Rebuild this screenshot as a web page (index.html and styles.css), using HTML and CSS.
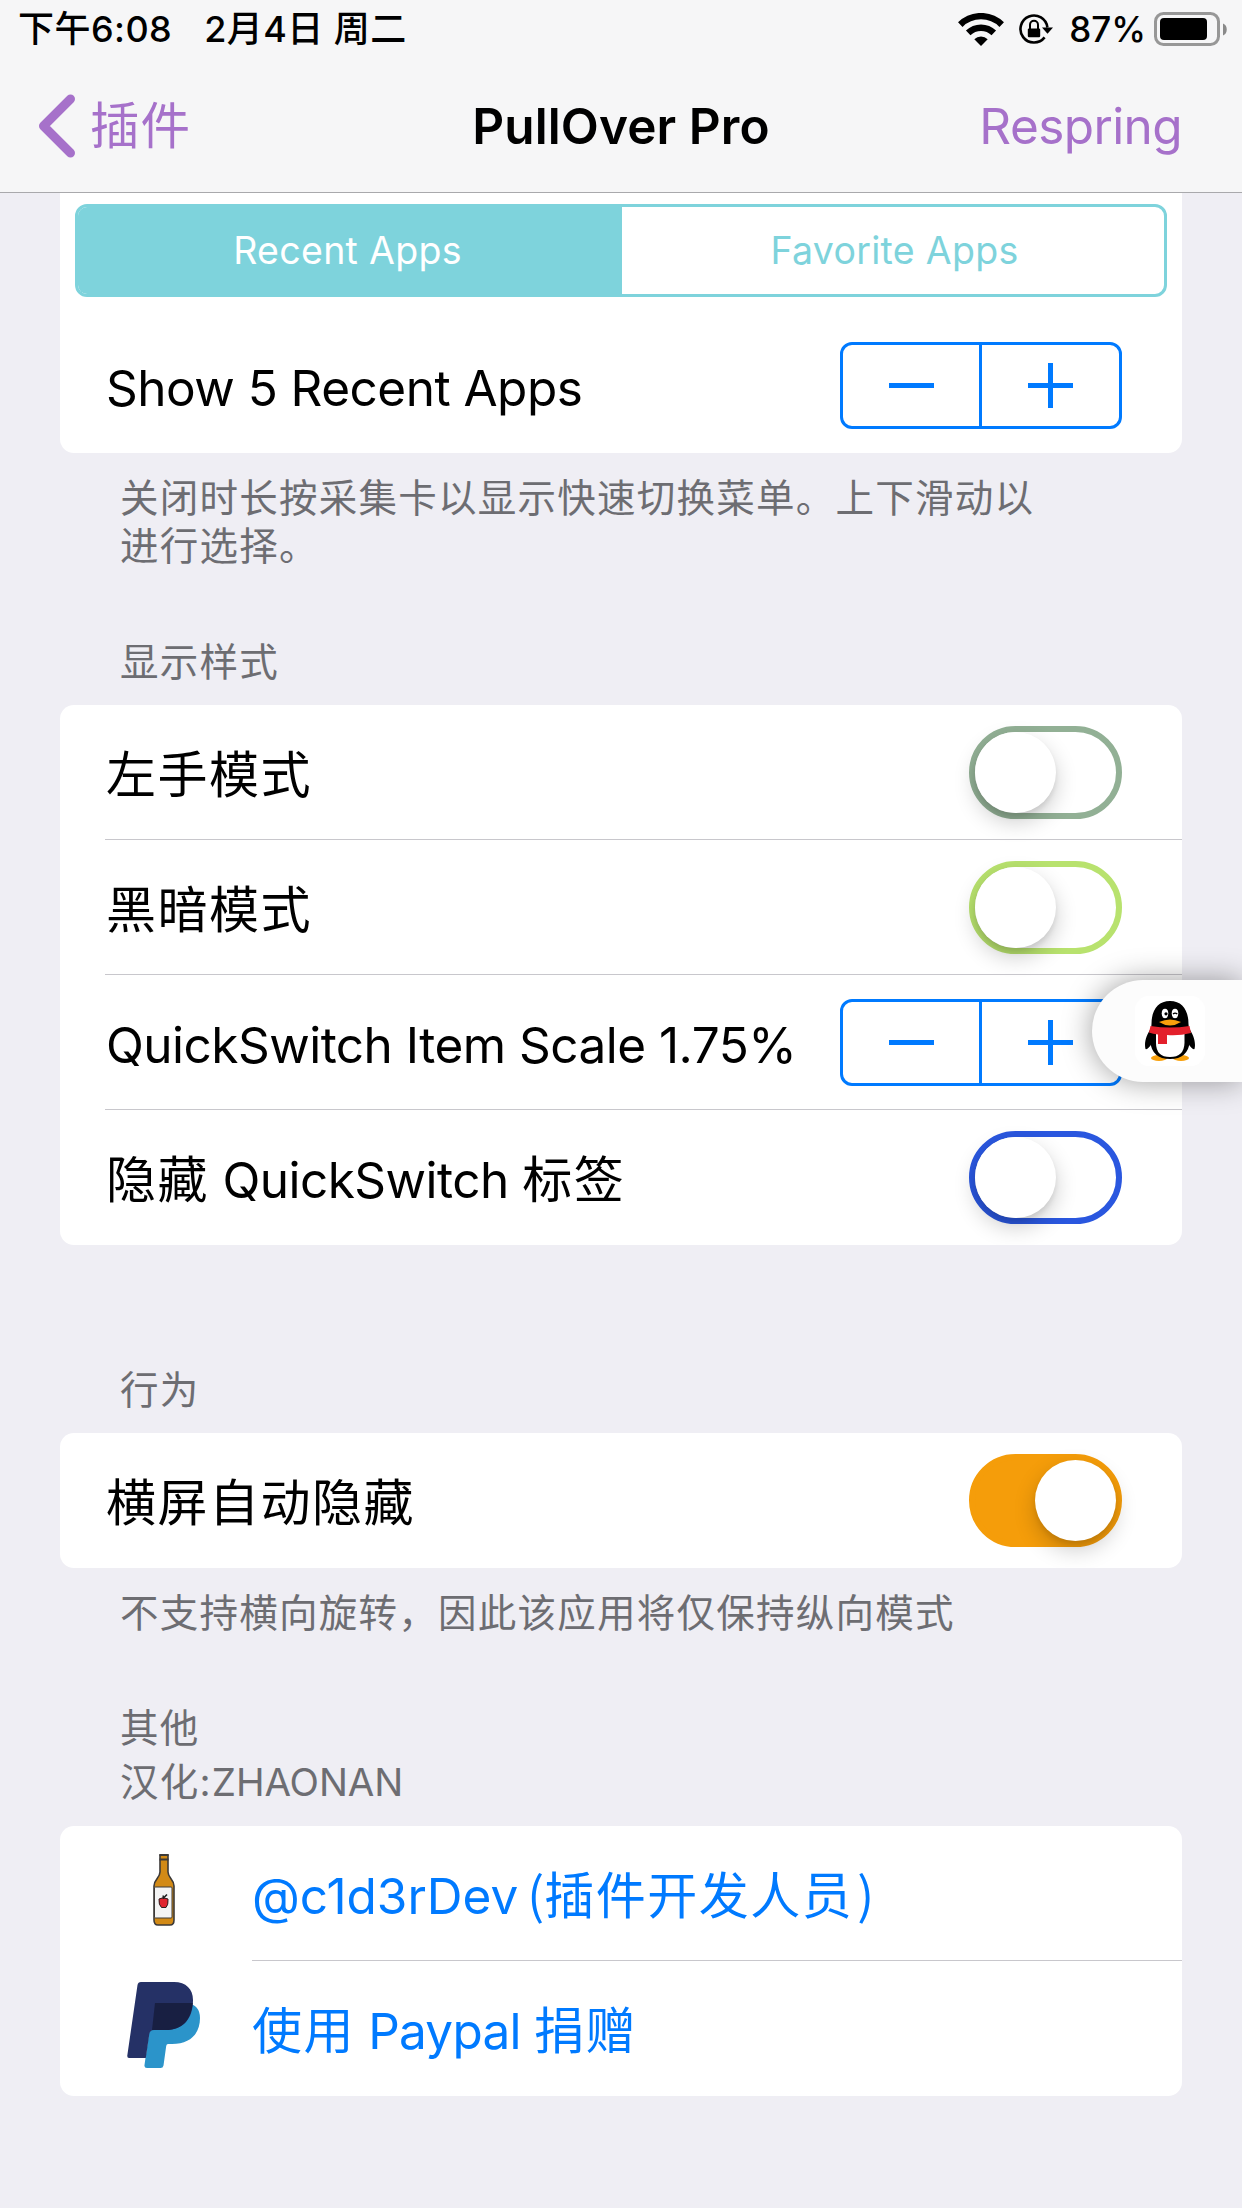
FILE: index.html
```html
<!DOCTYPE html>
<html lang="zh-CN">
<head>
<meta charset="utf-8">
<title>PullOver Pro</title>
<link rel="stylesheet" href="styles.css">
</head>
<body>
<div class="screen">
  <header class="top">
    <div class="status">
      <div class="status-left"><span class="clock">下午6:08</span><span class="date">2月4日 周二</span></div>
      <div class="status-right">
        <svg class="wifi" width="46" height="34" viewBox="0 0 46 34">
          <g fill="none" stroke="#000" stroke-width="6.4">
            <path d="M2.3 11.6A29.5 29.5 0 0 1 43.7 11.6"/>
            <path d="M10.2 19.9A18.3 18.3 0 0 1 35.8 19.9"/>
          </g>
          <path d="M23 33L16.3 26.2A9.6 9.6 0 0 1 29.7 26.2Z"/>
        </svg>
        <svg class="lock" width="36" height="34" viewBox="0 0 36 34">
          <path d="M26.6 24.4A13.500 13.500 0 1 1 29.400 14.500" fill="none" stroke="#000" stroke-width="2.6"/>
          <path d="M24 14.500H35L29.500 20.800Z"/>
          <rect x="9.800" y="15.500" width="12.400" height="8.800" rx="1.200"/>
          <path d="M12 16V11.800A4 4 0 0 1 20 11.800V16" fill="none" stroke="#000" stroke-width="2"/>
        </svg>
        <span class="percent">87%</span>
        <svg class="battery" width="74" height="35" viewBox="0 0 74 35">
          <rect x="1.5" y="1.5" width="63" height="31" rx="8" fill="none" stroke="#979797" stroke-width="3"/>
          <rect x="6" y="6" width="47" height="22" rx="4"/>
          <path d="M69 11.5C74 13 74 22 69 23.5Z" fill="#8a8a8a"/>
        </svg>
      </div>
    </div>
    <nav class="nav">
      <a class="back"><svg width="38" height="64" viewBox="0 0 38 64"><path d="M32.5 5L5.5 32L32.5 59" fill="none" stroke="#a671ca" stroke-width="9" stroke-linecap="round" stroke-linejoin="round"/></svg><span class="back-text">插件</span></a>
      <h1 class="title">PullOver Pro</h1>
      <a class="action">Respring</a>
    </nav>
  </header>

  <main class="list">
    <section class="card card-first">
      <div class="segments"><span class="segment selected">Recent Apps</span><span class="segment">Favorite Apps</span></div>
      <div class="row"><span class="label"><span class="latin">Show 5 Recent Apps</span></span><span class="stepper"><i class="minus"></i><i class="plus"></i></span></div>
    </section>
    <p class="footnote">关闭时长按采集卡以显示快速切换菜单。上下滑动以<br>进行选择。</p>

    <h2 class="heading heading-style">显示样式</h2>
    <section class="card">
      <div class="row"><span class="label">左手模式</span><span class="switch sage"></span></div>
      <div class="row"><span class="label">黑暗模式</span><span class="switch lime"></span></div>
      <div class="row"><span class="label"><span class="latin">QuickSwitch Item Scale 1.75%</span></span><span class="stepper"><i class="minus"></i><i class="plus"></i></span></div>
      <div class="row"><span class="label">隐藏<span class="latin"> QuickSwitch </span>标签</span><span class="switch blue"></span></div>
    </section>

    <h2 class="heading heading-behavior">行为</h2>
    <section class="card">
      <div class="row"><span class="label">横屏自动隐藏</span><span class="switch on"></span></div>
    </section>
    <p class="footnote">不支持横向旋转，因此该应用将仅保持纵向模式</p>

    <h2 class="heading heading-other">其他<br>汉化:<span class="latin-name">ZHAONAN</span></h2>
    <section class="card links">
      <a class="row link">
        <span class="icon"><svg width="24" height="74" viewBox="0 0 24 74">
          <path d="M8 2H16V19C16 25 22 26 22 33V67Q22 72 18 72H6Q2 72 2 67V33C2 26 8 25 8 19Z" fill="#d28a16" stroke="#3d3a38" stroke-width="1.6"/>
          <path d="M7.5 2H16.5M7.5 6.500H16.500" stroke="#3d3a38" stroke-width="1.8"/>
          <rect x="2.500" y="34" width="17.500" height="31" rx="1" fill="#f4f4f4" stroke="#3d3a38" stroke-width="1"/>
          <path d="M7 46Q11 43.500 16 46Q16.500 52 14 54.500H9.500Q6.500 52 7 46Z" fill="#e0252f" stroke="#2d2020"/>
          <path d="M11.500 46L11.200 42.500M11.500 45L15 41.500" stroke="#222" stroke-width="1.600"/>
        </svg></span>
        <span class="label"><span class="latin-dev">@c1d3rDev</span><span class="paren paren-open">(</span>插件开发人员<span class="paren paren-close">)</span></span>
      </a>
      <a class="row link">
        <span class="icon"><svg width="74" height="88" viewBox="0 0 74 88">
          <path d="M30 22H60Q73 24 73 37C73 53 63 63 45 63H41Q39.500 63 39.200 65L36.500 84.500Q36 87 33.500 87H20Q17 87 17.500 84L22 52Z" fill="#2b94ca"/>
          <path d="M14 1H47C59 1 66 8 66 19C66 38 56 49 39 49H27Q23 49 22.300 53L18.800 77H2Q0 77 .3 74.500L10.500 4Q11 1 14 1Z" fill="#253166"/>
          <path d="M28 22H65.700C64 40 54 49 39 49H25Z" fill="#181f42"/>
        </svg></span>
        <span class="label">使用<span class="latin latin-pay"> Paypal </span>捐赠</span>
      </a>
    </section>
  </main>

  <div class="floating">
    <span class="app"><svg width="50" height="60" viewBox="0 0 50 60">
      <ellipse cx="14" cy="57" rx="8" ry="3" fill="#f8a00c"/><ellipse cx="36" cy="57" rx="8" ry="3" fill="#f8a00c"/>
      <path d="M7 26C1 34-1 42 .5 48Q3 49 7 42ZM43 26C49 34 51 42 49.500 48Q47 49 43 42Z"/>
      <path d="M25 0C37 0 43.500 9 43.500 23L45 40Q43 58 25 58T5 40L6.500 23C6.500 9 13 0 25 0Z"/>
      <path d="M11 32H39.500V42Q39 56 25 56T11 42Z" fill="#fff"/>
      <path d="M5.500 25Q25 28 44.500 25L46 32Q34 35 22 34V43H13V33.500Q8 33 4 31.500Z" fill="#e3202b"/>
      <ellipse cx="20" cy="12.500" rx="3.300" ry="4.800" fill="#fff"/><ellipse cx="30" cy="12.500" rx="3.300" ry="4.800" fill="#fff"/>
      <circle cx="21" cy="12.800" r="1.600"/><path d="M28 13Q30 11.200 32.300 13" fill="none" stroke="#000" stroke-width="1.300"/>
      <path d="M14 21Q25 16 36 21Q25 28 14 21Z" fill="#f8a00c"/>
    </svg></span>
  </div>
</div>
</body>
</html>
```
FILE: styles.css
```css
* { box-sizing: border-box; margin: 0; padding: 0; }
body {
  background: #efeef4;
  color: #000;
  font-family: Inter, "Noto Sans CJK SC", sans-serif;
  font-weight: 400;
}
.screen { position: relative; width: 1242px; height: 2208px; overflow: hidden; }

/* Status and navigation bars */
.top { height: 193px; background: #f6f6f7; border-bottom: 1px solid #a9a9ac; }
.status { display: flex; justify-content: space-between; height: 60px; padding: 0 14px 0 18px; font-size: 35px; line-height: 58px; white-space: nowrap; font-weight: 500; }
.status-left { display: flex; gap: 32px; font-size: 36px; letter-spacing: .450px; }
.status-right { display: flex; align-items: flex-start; }
.wifi { margin: 13px 14px 0 0; }
.lock { margin: 13px 15px 0 0; }
.battery { margin: 12px 0 0 8px; }
.nav { display: grid; grid-template-columns: 1fr auto 1fr; align-items: center; height: 132px; padding: 0 38px; font-size: 49.500px; line-height: 60px; }
.back { display: flex; align-items: center; gap: 14px; color: #a671ca; letter-spacing: 1px; }
.title { font-size: 49.500px; font-weight: 600; letter-spacing: .1px; }
.action { justify-self: end; margin-right: 22px; color: #a671ca; letter-spacing: -.600px; }

/* Grouped list */
.list { padding: 0 60px; }
.card { overflow: hidden; border-radius: 14px; background: #fff; }
.card-first { height: 260px; padding-top: 11px; border-radius: 0 0 14px 14px; }
.segments { display: flex; height: 93px; margin: 0 15px 21px; border: 3px solid #7ed3dc; border-radius: 12px; overflow: hidden; }
.segment { flex: 1; padding-left: 3px; font-size: 37.500px; line-height: 88px; text-align: center; color: #7ed3dc; letter-spacing: .3px; }
.segment.selected { padding: 0 5px 0 0; background: #7ed3dc; color: #fff; }
.row { position: relative; display: flex; align-items: center; justify-content: space-between; height: 135px; padding: 0 60px 0 46px; }
.row + .row::before { content: ""; position: absolute; top: -1px; left: 45px; right: 0; height: 1px; background: #c8c7cc; }
.label { padding-top: 4px; font-size: 50px; line-height: 72px; white-space: nowrap; letter-spacing: 1.500px; }
.latin { font-size: 49.500px; letter-spacing: -.520px; }
.latin-pay { letter-spacing: -.750px; }
.latin-dev { font-size: 49.500px; letter-spacing: 0; }
.latin-name { letter-spacing: -.100px; }
.paren { font-family: "Noto Sans CJK SC", sans-serif; line-height: 0; letter-spacing: 0; }
.paren-open { margin-left: 9px; }
.paren-close { margin-left: 4px; }
.footnote, .heading { padding-left: 60px; font-size: 38.500px; font-weight: 400; color: #6d6d72; letter-spacing: 1.250px; }
.footnote { padding-top: 21px; line-height: 48px; }
.heading { line-height: 54px; }
.heading-style { margin-top: 65px; height: 70px; }
.heading-behavior { padding-top: 118px; height: 188px; }
.heading-other { padding-top: 64px; height: 189px; }

.stepper { display: flex; flex: none; width: 282px; height: 87px; border: 3px solid #007aff; border-radius: 12px; }
.stepper .minus { width: 136px; background: linear-gradient(#007aff, #007aff) center / 45px 5px no-repeat; }
.stepper .plus { width: 140px; border-left: 3px solid #007aff; background: linear-gradient(#007aff, #007aff) center / 45px 5px no-repeat, linear-gradient(#007aff, #007aff) center / 5px 45px no-repeat; }

.switch { display: flex; width: 153px; height: 93px; border: 6px solid; border-radius: 47px; }
.switch::after { content: ""; width: 81px; height: 81px; border-radius: 50%; background: #fff; box-shadow: 0 9px 22px rgba(0, 0, 0, .2), 0 4px 5px rgba(0, 0, 0, .08); }
.sage { border-color: #92b095; }
.lime { border-color: #b8e26e; }
.blue { border-color: #2a57df; }
.on { justify-content: flex-end; border-color: #f59d0a; background: #f59d0a; }

.link { justify-content: flex-start; padding-left: 41px; color: #007aff; }
.links .row + .row::before { left: 192px; }
.icon { display: flex; align-items: center; justify-content: center; width: 125px; margin-right: 26px; padding-bottom: 8px; }

/* Edge tab that floats above the list */
.floating { position: absolute; top: 980px; right: 0; display: flex; align-items: center; width: 150px; height: 102px; padding-left: 43px; border-radius: 51px 0 0 51px; background: #fcfcfc; box-shadow: 0 0 30px rgba(0, 0, 0, .38); }
.app { display: flex; align-items: center; justify-content: center; width: 70px; height: 70px; border-radius: 14px; background: #fff; }
```
